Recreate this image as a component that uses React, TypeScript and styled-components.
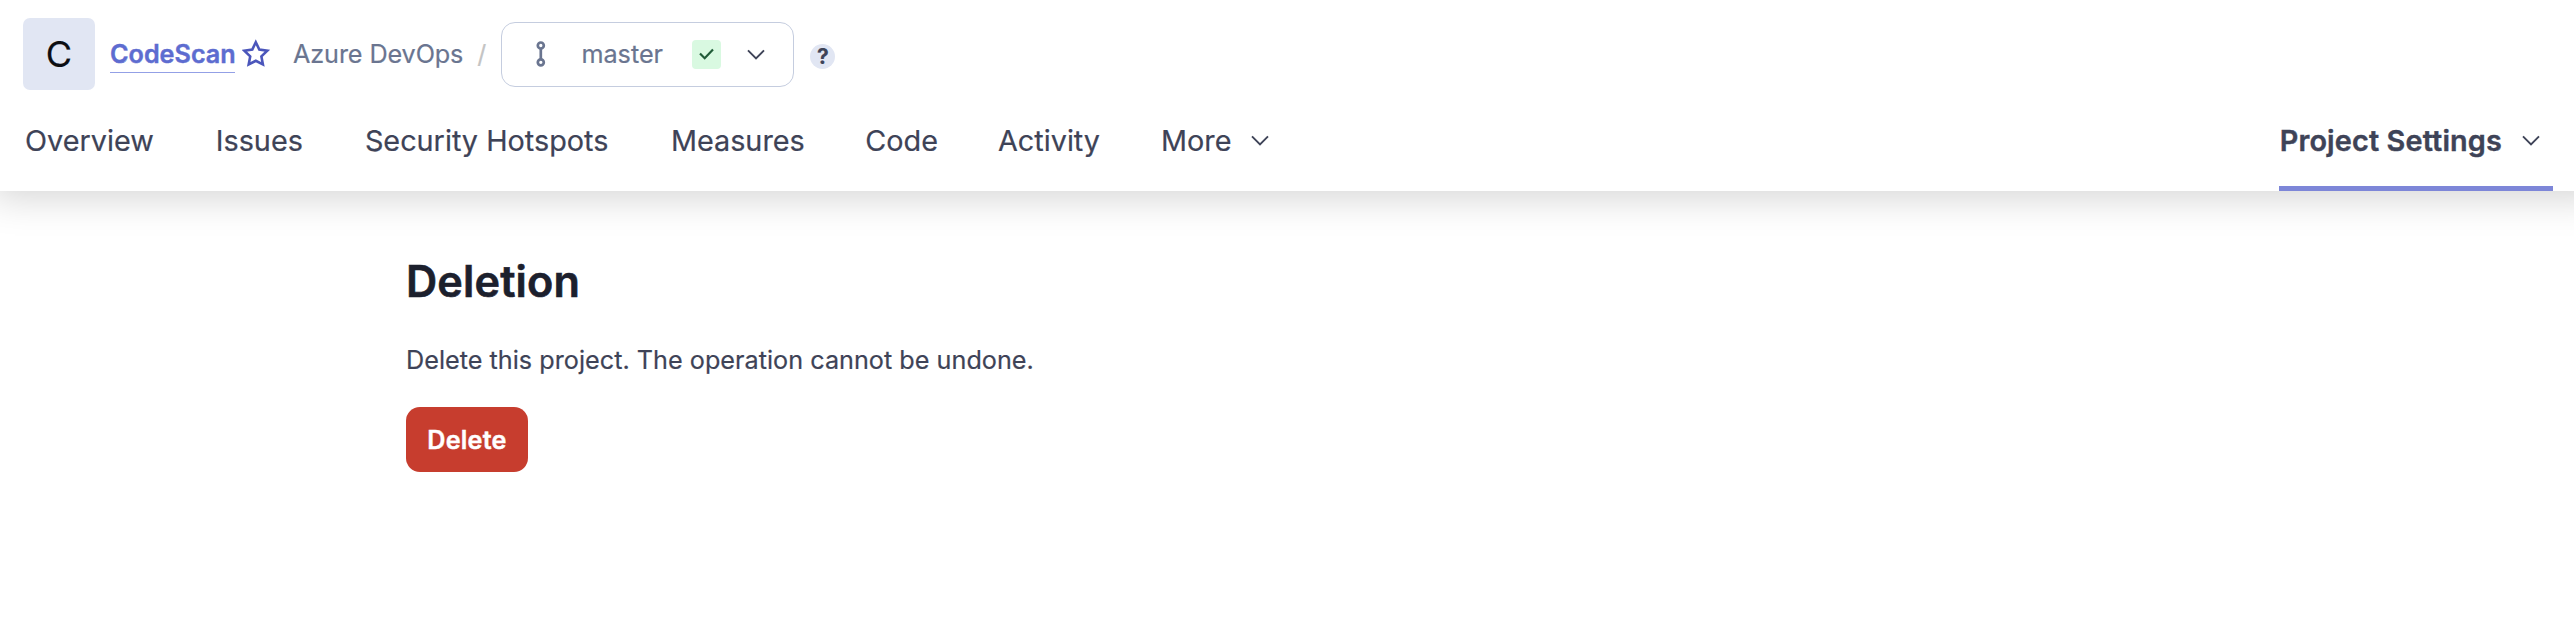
import React from "react";
import styled, { createGlobalStyle } from "styled-components";

const GlobalStyle = createGlobalStyle`
  *, *::before, *::after { box-sizing: border-box; }
  body {
    margin: 0;
    background: #fff;
    color: #3e4357;
    font-family: Inter, "Liberation Sans", sans-serif;
    font-size: 25.2px;
    line-height: 36px;
    -webkit-text-stroke: 0.2px currentColor;
  }
`;

const Page = styled.div`
  min-height: 628px;
  background: #fff;
  overflow: hidden;
`;

const Header = styled.header`
  height: 191px;
  padding: 18px 21px 0 23px;
  display: flex;
  flex-direction: column;
  background: #fff;
  box-shadow: 12px -13px 36px 20px rgba(0, 0, 0, 0.17);
`;

const Breadcrumbs = styled.div`
  height: 72px;
  display: flex;
  align-items: center;
`;

const Avatar = styled.div`
  width: 72px;
  height: 72px;
  border-radius: 7px;
  display: flex;
  align-items: center;
  justify-content: center;
  background: #e1e6f3;
  color: #0d0e12;
  font-size: 36px;
`;

const ProjectLink = styled.a`
  width: 125px;
  height: 37px;
  margin-left: 15px;
  border-bottom: 1px solid #93a0e6;
  color: #5d6cd0;
  font-weight: 600;
  -webkit-text-stroke-width: 0.4px;
  white-space: nowrap;
  cursor: pointer;
`;

const StarIcon = styled.svg`
  width: 29px;
  height: 29px;
  margin: 0 0 2px 7px;
`;

const Organization = styled.span`
  margin-left: 22px;
  color: #6a7590;
  letter-spacing: -0.1px;
`;

const Separator = styled.span`
  margin-left: 14px;
  color: #c4c4c4;
`;

const BranchSelect = styled.button`
  width: 293px;
  height: 65px;
  margin-left: 15px;
  padding: 0 28px 0 34px;
  display: flex;
  align-items: center;
  border: 1px solid #c5cddf;
  border-radius: 14px;
  background: #fff;
  color: #6a7590;
  font: inherit;
`;

const BranchIcon = styled.svg`
  width: 10px;
  height: 26px;
  margin-right: 35px;
`;

const QualityBadge = styled.span`
  width: 29px;
  height: 29px;
  margin-left: auto;
  margin-right: 26px;
  display: flex;
  align-items: center;
  justify-content: center;
  border-radius: 4px;
  background: #d9f9e1;
`;

const Chevron = styled.svg`
  width: 18px;
  height: 11px;
  flex: none;
`;

const Help = styled.span`
  width: 25px;
  height: 25px;
  margin: 5px 0 0 16px;
  display: flex;
  align-items: center;
  justify-content: center;
  border-radius: 50%;
  background: #e1e6f3;
  color: #3e4357;
  font-size: 21px;
  font-weight: 700;
`;

const Nav = styled.nav`
  height: 101px;
  display: flex;
`;

const NavItem = styled.a<{ $active?: boolean; $gap?: number }>`
  height: 101px;
  margin-right: ${(p) => p.$gap ?? 60}px;
  padding: 29px 0 0 ${(p) => (p.$active ? 1 : 2)}px;
  display: flex;
  border-bottom: 5px solid ${(p) => (p.$active ? "#7d86d8" : "transparent")};
  font-size: 28.8px;
  line-height: 43px;
  font-weight: ${(p) => (p.$active ? 600 : 400)};
  letter-spacing: ${(p) => (p.$active ? "0.15px" : "normal")};
  -webkit-text-stroke-width: ${(p) => (p.$active ? 0.4 : 0.2)}px;
  white-space: nowrap;
  cursor: pointer;

  ${Chevron} { margin: 16px 13px 0 20px; }
`;

const Spacer = styled.div`
  flex: 1;
`;

const Main = styled.main`
  padding: 63px 0 0 406px;
`;

const Title = styled.h1`
  margin: 0;
  color: #1c202d;
  font-size: 43.2px;
  line-height: 54px;
  font-weight: 600;
  letter-spacing: 0.15px;
  -webkit-text-stroke-width: 0.6px;
`;

const Description = styled.p`
  margin: 34px 0 29px;
  letter-spacing: 0.02px;
`;

const DangerButton = styled.button`
  width: 122px;
  height: 65px;
  padding: 0;
  border: 0;
  border-radius: 14px;
  background: #c73d2e;
  color: #fff;
  font: inherit;
  font-weight: 600;
  letter-spacing: 0.2px;
  -webkit-text-stroke-width: 0.4px;
`;

function ChevronDown() {
  return (
    <Chevron viewBox="0 0 18 11" fill="none" stroke="#3e4357" strokeWidth="1.9">
      <path d="M1 1.4 9 9.4 17 1.4" />
    </Chevron>
  );
}

const tabs = [
  { label: "Overview", gap: 60 },
  { label: "Issues", gap: 60 },
  { label: "Security Hotspots", gap: 60.5 },
  { label: "Measures", gap: 58.5 },
  { label: "Code", gap: 58 },
  { label: "Activity", gap: 59 },
];

export default function App() {
  return (
    <Page>
      <GlobalStyle />
      <Header>
        <Breadcrumbs>
          <Avatar>C</Avatar>
          <ProjectLink>CodeScan</ProjectLink>
          <StarIcon viewBox="0 0 29 29" fill="none" stroke="#4b56bb" strokeWidth="2.6" strokeLinejoin="miter">
            <path d="M13.8 3.2 17.3 10.6 25.3 11.7 19.4 17.4 20.9 25.4 13.8 21.8 6.7 25.4 8.2 17.4 2.3 11.7 10.3 10.6Z" />
          </StarIcon>
          <Organization>Azure DevOps</Organization>
          <Separator>/</Separator>
          <BranchSelect>
            <BranchIcon viewBox="0 0 10 26" fill="none" stroke="#6a7590" strokeWidth="2.7">
              <circle cx="4.8" cy="4.5" r="3" />
              <circle cx="4.8" cy="21.3" r="3" />
              <path d="M4.8 7.5V18.5" />
            </BranchIcon>
            master
            <QualityBadge>
              <svg width="15" height="12" viewBox="0 0 15 12" fill="none" stroke="#215c38" strokeWidth="2.2">
                <path d="M1 5.5 5.7 10.2 14 1.6" />
              </svg>
            </QualityBadge>
            <ChevronDown />
          </BranchSelect>
          <Help>?</Help>
        </Breadcrumbs>
        <Nav>
          {tabs.map((tab) => (
            <NavItem key={tab.label} $gap={tab.gap}>
              {tab.label}
            </NavItem>
          ))}
          <NavItem>
            More
            <ChevronDown />
          </NavItem>
          <Spacer />
          <NavItem $active $gap={0}>
            Project Settings
            <ChevronDown />
          </NavItem>
        </Nav>
      </Header>
      <Main>
        <Title>Deletion</Title>
        <Description>Delete this project. The operation cannot be undone.</Description>
        <DangerButton>Delete</DangerButton>
      </Main>
    </Page>
  );
}
